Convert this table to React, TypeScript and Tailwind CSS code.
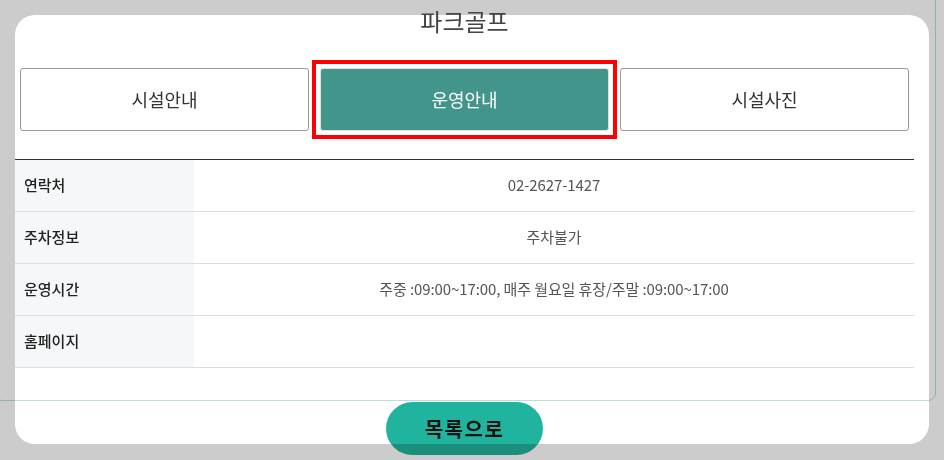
import React from "react";

const rows: { th: string; td: string }[] = [
  { th: "연락처", td: "02-2627-1427" },
  { th: "주차정보", td: "주차불가" },
  { th: "운영시간", td: "주중 :09:00~17:00, 매주 월요일 휴장/주말 :09:00~17:00" },
  { th: "홈페이지", td: "" },
];

export default function App() {
  return (
    <div
      className="relative w-[944px] h-[460px] overflow-hidden bg-[#cccccc] pt-[15px] pl-[15px]"
      style={{ fontFamily: '"Noto Sans CJK KR", "Noto Sans", sans-serif' }}
    >
      <div className="w-[914px] h-[429px] bg-white rounded-[20px] pr-[15px] flex flex-col">
        <h1 className="-mt-[11px] h-[34px] leading-[34px] text-center text-[24px] font-normal text-[#444]">
          파크골프
        </h1>
        <div className="mt-[30px] px-[5px] grid grid-cols-3 gap-[11px]">
          <button className="h-[63px] border border-[#999] rounded-[3px] bg-white text-[18px] text-[#333]">
            시설안내
          </button>
          <div className="h-[63px] outline-[4px] outline-solid outline-[#ff0000] outline-offset-[4px]">
            <button className="w-full h-full border border-[#e0e0e0] rounded-[3px] bg-[#41958a] text-[18px] text-white">
              운영안내
            </button>
          </div>
          <button className="h-[63px] border border-[#999] rounded-[3px] bg-white text-[18px] text-[#333]">
            시설사진
          </button>
        </div>
        <div className="mt-[28px] border-t border-[#333]">
          {rows.map((r) => (
            <div key={r.th} className="flex h-[52px] border-b border-[#dddddd]">
              <div className="w-[179px] bg-[#f6f7f9] flex items-center pl-[9px] text-[15px] font-medium text-[#222]">
                {r.th}
              </div>
              <div className="flex-1 flex items-center justify-center text-[15px] text-[#555] tracking-[-0.1px]">
                {r.td}
              </div>
            </div>
          ))}
        </div>
        <div className="mt-[34px] flex justify-center">
          <button className="w-[157px] h-[53px] rounded-full bg-[#20b39d] mix-blend-multiply text-[20px] font-bold text-[#111] tracking-[1.5px]">
            목록으로
          </button>
        </div>
      </div>
      <div className="pointer-events-none absolute left-[-6px] top-[-20px] w-[942px] h-[421px] border-r border-b border-l border-t border-[#b2e2d8] mix-blend-multiply rounded-[8px]" />
    </div>
  );
}
